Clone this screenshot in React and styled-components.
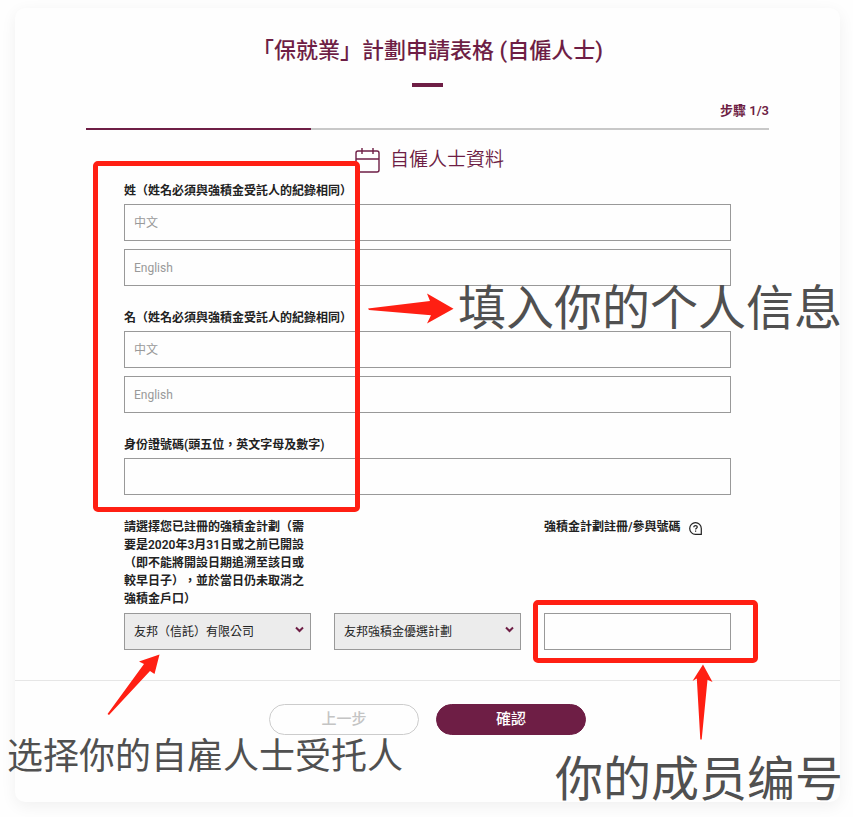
import React, { useState } from "react";
import styled, { createGlobalStyle } from "styled-components";

const plum = "#6e1e45";
const red = "#ff1f13";

const GlobalStyle = createGlobalStyle`
  *,
  *::before,
  *::after {
    box-sizing: border-box;
  }

  body {
    margin: 0;
    background-color: #fefefe;
    color: #222;
    font-family: Roboto, "Noto Sans CJK TC", sans-serif;
    font-size: 12px;
    line-height: 18px;
    text-spacing-trim: space-all;
  }
`;

const Page = styled.main`
  padding: 8px 13px 15px 15px;
  overflow: hidden;
`;

const Card = styled.form`
  position: relative;
  background-color: #fefefe;
  border-radius: 10px;
  box-shadow: 0 4px 16px rgba(0, 0, 0, 0.06);
`;

const Header = styled.header`
  padding: 26px 71px 0;
  display: flex;
  flex-direction: column;
  align-items: center;
`;

const Title = styled.h1`
  margin: 0;
  color: ${plum};
  font-size: 22px;
  line-height: 34px;
  font-weight: 500;
`;

const TitleBar = styled.div`
  width: 31px;
  height: 4px;
  margin-top: 15px;
  background-color: ${plum};
`;

const Step = styled.div`
  align-self: flex-end;
  margin-top: 15px;
  color: ${plum};
  font-size: 13px;
  font-weight: 600;
`;

const Progress = styled.div`
  width: 100%;
  height: 2px;
  margin-top: 8px;
  background-color: #c8c8c8;
`;

const ProgressFill = styled.div`
  width: 33%;
  height: 100%;
  background-color: ${plum};
`;

const SectionTitle = styled.h2`
  margin: 0;
  padding: 17px 0 9px 4px;
  display: flex;
  justify-content: center;
  align-items: center;
  gap: 10px;
  color: ${plum};
  font-size: 19px;
  line-height: 26px;
  font-weight: 350;
`;

const Body = styled.div`
  padding: 0 109px 30px;
`;

const PersonalFields = styled.div`
  position: relative;
  display: flex;
  flex-direction: column;
  gap: 23px;
`;

const Group = styled.fieldset`
  margin: 0;
  padding: 0;
  border: 0;
  min-width: 0;
`;

const InputStack = styled.div`
  display: flex;
  flex-direction: column;
  gap: 8px;
`;

const Label = styled.label`
  display: block;
  font-weight: 600;
`;

const Legend = styled.legend`
  display: block;
  padding: 0 0 4px;
  font-weight: 600;
`;

const Input = styled.input`
  display: block;
  width: 100%;
  height: 37px;
  padding: 0 9px;
  border: 1px solid #999;
  border-radius: 0;
  background-color: transparent;
  color: #222;
  font: inherit;

  &::placeholder {
    color: #999;
    opacity: 1;
  }
`;

const SchemeRow = styled.div`
  margin-top: 23px;
  display: grid;
  grid-template-columns: repeat(3, minmax(0, 1fr));
  column-gap: 23px;
`;

const SchemeField = styled.div`
  display: flex;
  flex-direction: column;
  justify-content: ${({ $end }) => ($end ? "flex-end" : "space-between")};
  gap: 5px;
`;

const LabelLine = styled.div`
  display: flex;
  align-items: center;
  gap: 8px;
`;

const HelpButton = styled.button`
  display: flex;
  padding: 2px 0 0;
  border: 0;
  background: none;
  color: #222;
`;

const SelectBox = styled.div`
  display: grid;
  align-items: center;

  & > * {
    grid-area: 1 / 1;
  }

  svg {
    justify-self: end;
    margin: 0 7px 4px 0;
    pointer-events: none;
  }
`;

const Select = styled.select`
  width: 100%;
  height: 37px;
  padding: 0 24px 0 9px;
  border: 1px solid #999;
  border-radius: 0;
  background-color: #ececec;
  color: #222;
  font: inherit;
  appearance: none;
`;

const InputFrame = styled.div`
  position: relative;
`;

const Footer = styled.footer`
  padding: 23px 20px 67px;
  border-top: 1px solid #e6e6e6;
  display: flex;
  justify-content: center;
  gap: 17px;
`;

const Button = styled.button`
  width: 150px;
  height: 31px;
  padding: 0 0 2px;
  border: 1px solid ${({ $primary }) => ($primary ? plum : "#ccc")};
  border-radius: 16px;
  background-color: ${({ $primary }) => ($primary ? plum : "#fefefe")};
  color: ${({ $primary }) => ($primary ? "#fff" : "#c4c4c4")};
  font-family: inherit;
  font-size: 15px;
  line-height: 18px;
  font-weight: 500;
`;

/* Guide marks drawn over the form */
const Highlight = styled.div`
  position: absolute;
  border: 5px solid ${red};
  border-radius: 5px;
  pointer-events: none;
`;

const PersonalHighlight = styled(Highlight)`
  top: -21px;
  bottom: -17px;
  left: -31px;
  width: 267px;
`;

const MemberHighlight = styled(Highlight)`
  inset: -13px -27px -13px -11px;
`;

const Arrow = styled.svg`
  position: absolute;
  fill: ${red};
  pointer-events: none;
`;

const Note = styled.p`
  position: absolute;
  margin: 0;
  color: #505050;
  font-family: "Noto Sans CJK SC", sans-serif;
  font-size: ${({ $small }) => ($small ? 36 : 48)}px;
  line-height: ${({ $small }) => ($small ? 36 : 56)}px;
  font-weight: 400;
  white-space: nowrap;
  pointer-events: none;
`;

const PersonalArrow = styled(Arrow)`
  top: 285px;
  left: 353px;
`;

const PersonalNote = styled(Note)`
  top: 268px;
  left: 443px;
`;

const TrusteeArrow = styled(Arrow)`
  bottom: 87px;
  left: 92px;
`;

const TrusteeNote = styled(Note)`
  bottom: 31px;
  left: -8px;
`;

const MemberArrow = styled(Arrow)`
  bottom: 62px;
  right: 127px;
`;

const MemberNote = styled(Note)`
  bottom: -1px;
  right: -3px;
`;

const CalendarIcon = () => (
  <svg width="25" height="26" viewBox="0 0 25 26" fill="none" stroke={plum} aria-hidden="true">
    <rect x="1" y="4" width="23" height="21" rx="2" strokeWidth="1.4" />
    <path d="M1 12h23M7 1v6M18 1v6" strokeWidth="1.4" />
  </svg>
);

const ChevronIcon = () => (
  <svg width="9" height="7" viewBox="0 0 9 7" fill="none" stroke={plum} aria-hidden="true">
    <path d="M1 1.5l3.5 3.5L8 1.5" strokeWidth="2" />
  </svg>
);

const HelpIcon = () => (
  <svg width="13" height="13" viewBox="0 0 13 13" fill="none" stroke="currentColor" aria-hidden="true">
    <path d="M12.3 12.3H6.5A5.8 5.8 0 1 1 12.3 6.5z" strokeWidth="1.2" />
    <path d="M4.8 5.2c0-2.2 3.5-2.1 3.5-.1 0 1.2-1.7 1.1-1.7 2.5M6.6 8.5v1.2" strokeWidth="1.2" />
  </svg>
);

const nameFields = [
  { id: "surname", label: "姓（姓名必須與強積金受託人的紀錄相同）" },
  { id: "given-name", label: "名（姓名必須與強積金受託人的紀錄相同）" },
];

const App = () => {
  const [trustee, setTrustee] = useState("aia");
  const [scheme, setScheme] = useState("prime");

  return (
    <Page>
      <GlobalStyle />
      <Card onSubmit={(e) => e.preventDefault()}>
        <Header>
          <Title>「保就業」計劃申請表格 (自僱人士)</Title>
          <TitleBar />
          <Step>步驟 1/3</Step>
          <Progress>
            <ProgressFill />
          </Progress>
        </Header>
        <SectionTitle>
          <CalendarIcon />
          自僱人士資料
        </SectionTitle>
        <Body>
          <PersonalFields>
            {nameFields.map(({ id, label }) => (
              <Group key={id}>
                <Legend>{label}</Legend>
                <InputStack>
                  <Input name={`${id}-zh`} placeholder="中文" aria-label={`${label} 中文`} />
                  <Input name={`${id}-en`} placeholder="English" aria-label={`${label} English`} />
                </InputStack>
              </Group>
            ))}
            <div>
              <Legend as="label" htmlFor="hkid">
                身份證號碼(頭五位，英文字母及數字)
              </Legend>
              <Input id="hkid" />
            </div>
            <PersonalHighlight />
          </PersonalFields>
          <SchemeRow>
            <SchemeField>
              <Label htmlFor="trustee">
                請選擇您已註冊的強積金計劃（需要是2020年3月31日或之前已開設（即不能將開設日期追溯至該日或較早日子），並於當日仍未取消之強積金戶口）
              </Label>
              <SelectBox>
                <Select id="trustee" value={trustee} onChange={(e) => setTrustee(e.target.value)}>
                  <option value="aia">友邦（信託）有限公司</option>
                </Select>
                <ChevronIcon />
              </SelectBox>
            </SchemeField>
            <SchemeField $end>
              <SelectBox>
                <Select
                  aria-label="強積金計劃"
                  value={scheme}
                  onChange={(e) => setScheme(e.target.value)}
                >
                  <option value="prime">友邦強積金優選計劃</option>
                </Select>
                <ChevronIcon />
              </SelectBox>
            </SchemeField>
            <SchemeField>
              <LabelLine>
                <Label htmlFor="member">強積金計劃註冊/參與號碼</Label>
                <HelpButton type="button" aria-label="說明">
                  <HelpIcon />
                </HelpButton>
              </LabelLine>
              <InputFrame>
                <Input id="member" />
                <MemberHighlight />
              </InputFrame>
            </SchemeField>
          </SchemeRow>
        </Body>
        <Footer>
          <Button type="button">上一步</Button>
          <Button type="submit" $primary>
            確認
          </Button>
        </Footer>

        <PersonalArrow width="86" height="31" viewBox="0 0 86 31">
          <path d="M0 15.5L62 8l-3-7.5L85.5 15.7 59 30.5l4-8.2L1 17z" />
        </PersonalArrow>
        <PersonalNote>填入你的个人信息</PersonalNote>
        <TrusteeArrow width="53" height="61" viewBox="0 0 53 61">
          <path d="M0.5 60L37 10l-5-2.5L52.5 0.5 47.5 20 43 17 2 61z" />
        </TrusteeArrow>
        <TrusteeNote $small>选择你的自雇人士受托人</TrusteeNote>
        <MemberArrow width="21" height="76" viewBox="0 0 21 76">
          <path d="M11 0.5L20.5 18l-5-2.2L9.7 75.5H8.3L4.8 14.5 0.5 17z" />
        </MemberArrow>
        <MemberNote>你的成员编号</MemberNote>
      </Card>
    </Page>
  );
};

export default App;
